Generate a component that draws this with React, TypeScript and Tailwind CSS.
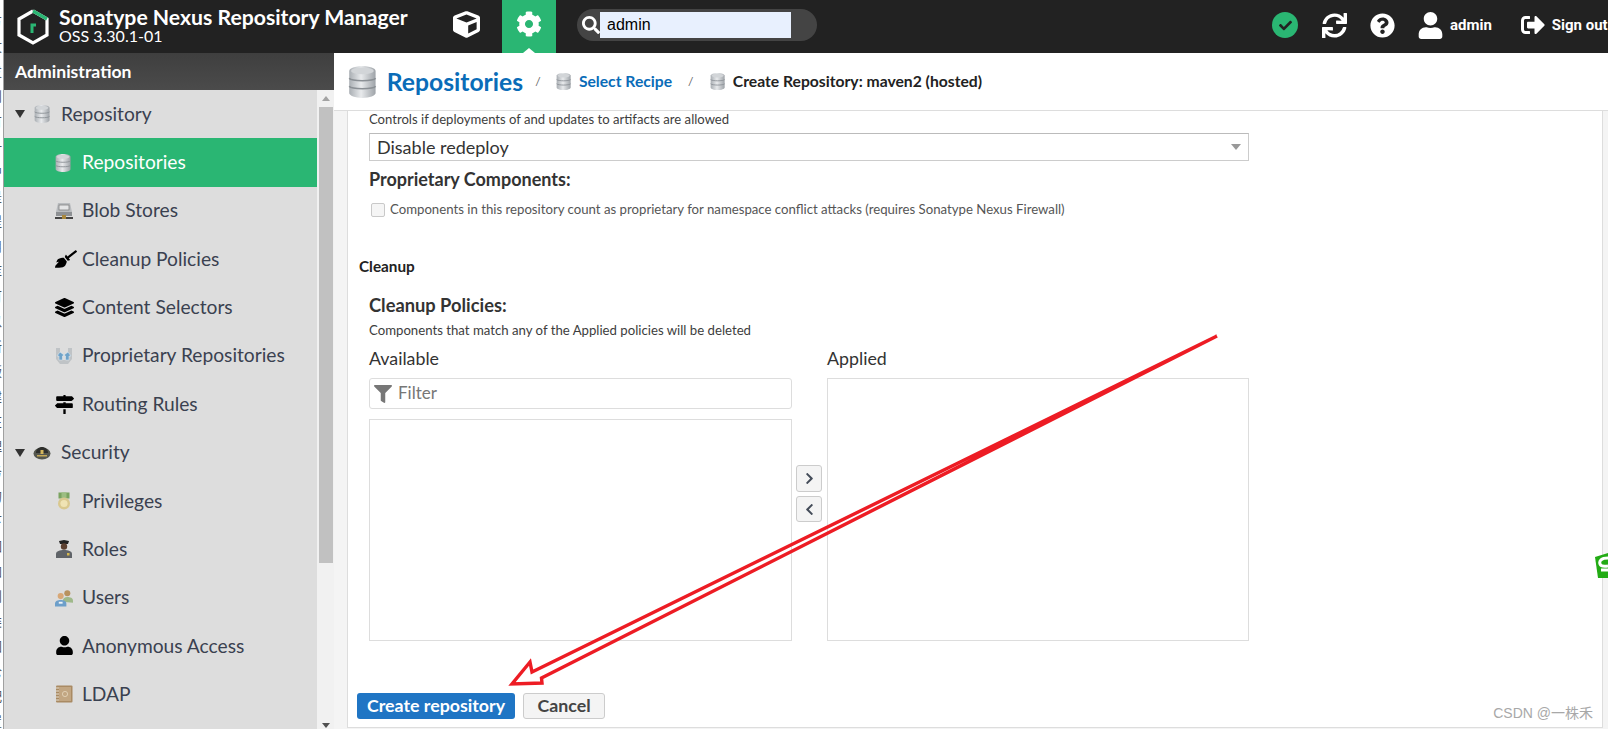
import React from "react";
import {
  FaBroom, FaCheck, FaChevronLeft, FaChevronRight, FaCog, FaCube, FaFilter, FaLayerGroup,
  FaMapSigns, FaQuestionCircle, FaSearch, FaSignOutAlt, FaSync, FaUser,
} from "react-icons/fa";

// Stacked-disk database glyph used for repositories
function DbIcon({ size = 17 }: { size?: number }) {
  return (
    <svg width={size * 0.9} height={size} viewBox="0 0 24 26" preserveAspectRatio="none" className="shrink-0">
      <defs>
        <linearGradient id="dbg" x1="0" x2="1" y1="0" y2="0">
          <stop offset="0" stopColor="#a9aeb3" />
          <stop offset="0.45" stopColor="#e8eaec" />
          <stop offset="1" stopColor="#9ea3a8" />
        </linearGradient>
      </defs>
      <path d="M1 4c0-2 5-4 11-4s11 2 11 4v18c0 2-5 4-11 4S1 24 1 22z" fill="url(#dbg)" />
      <ellipse cx="12" cy="4" rx="9.5" ry="2.8" fill="#d2d5d8" />
      <path d="M1 10c2 2.6 20 2.6 22 0M1 16.500c2 2.600 20 2.600 22 0" stroke="#8a8f94" strokeWidth="1.300" fill="none" />
    </svg>
  );
}

function BlobIcon() {
  return (
    <svg width="18" height="18" viewBox="0 0 18 18">
      <path d="M3 1h12l2 9H1z" fill="#b9bcbf" />
      <rect x="4" y="3" width="10" height="5" fill="#e4e5e6" stroke="#777" strokeWidth="0.700" />
      <rect x="1" y="10" width="16" height="4" fill="#8d9093" />
      <rect x="0" y="15" width="7" height="2" fill="#444" />
      <rect x="11" y="15" width="7" height="2" fill="#444" />
      <rect x="7" y="13" width="4" height="4" fill="#a8873c" />
    </svg>
  );
}

function ProprietaryIcon() {
  return (
    <svg width="18" height="18" viewBox="0 0 18 18">
      <path d="M1 1h4v9l3 3h2l3-3V1h4v11l-4 5H5l-4-5z" fill="#bfc3c6" />
      <path d="M5 5l4 3-1.500 1v4H4V9H2zM13 5l3 4h-2v4h-3.500V9L9 8z" fill="#6fa3c9" stroke="#e6eef4" strokeWidth="0.500" />
    </svg>
  );
}

function MedalIcon() {
  return (
    <svg width="18" height="18" viewBox="0 0 18 18">
      <rect x="3.500" y="0.500" width="11" height="6" fill="#7aa35f" />
      <rect x="6.500" y="0.500" width="5" height="6" fill="#9cbd82" />
      <circle cx="9" cy="11.500" r="6" fill="#d9c88f" />
      <circle cx="9" cy="11.500" r="3.600" fill="#efe3b4" />
    </svg>
  );
}

function OfficerIcon() {
  return (
    <svg width="18" height="18" viewBox="0 0 18 18">
      <path d="M4 1l5-1 5 1-1 3H5z" fill="#222" />
      <circle cx="9" cy="6.500" r="3.200" fill="#5c4030" />
      <path d="M1 18v-4c0-3 4-4 8-4s8 1 8 4v4z" fill="#5f6368" />
      <rect x="12" y="13" width="2.500" height="2.500" fill="#d5b84e" />
    </svg>
  );
}

function UsersIcon() {
  return (
    <svg width="19" height="18" viewBox="0 0 19 18">
      <circle cx="13" cy="4" r="3.200" fill="#b8925f" />
      <path d="M8 13c0-3 2-5 5-5s6 1 6 4v2z" fill="#9fb98a" />
      <circle cx="6" cy="7" r="3.200" fill="#d8a877" />
      <path d="M0 18v-3c0-3 3-4 6-4s6 1 6 4v3z" fill="#6d9fca" />
      <rect x="4" y="13" width="4" height="2" fill="#eef3f8" />
    </svg>
  );
}

function LdapIcon() {
  return (
    <svg width="18" height="18" viewBox="0 0 18 18">
      <rect x="1" y="0.500" width="16.500" height="17" rx="1" fill="#a98a63" />
      <rect x="4" y="2" width="12" height="14" fill="#c2a682" />
      <path d="M1 3h3M1 6h3M1 9h3M1 12h3M1 15h3" stroke="#e9e2d4" strokeWidth="1.200" />
      <circle cx="10" cy="9" r="2.600" fill="none" stroke="#e2d2b8" strokeWidth="0.900" />
    </svg>
  );
}

function CapIcon() {
  return (
    <svg width="18" height="14" viewBox="0 0 18 14">
      <ellipse cx="9" cy="7.500" rx="8.500" ry="6" fill="#55574f" />
      <path d="M3 7c0-4 3-6 6-6s6 2 6 6z" fill="#2e2f2c" />
      <rect x="7.500" y="4" width="3" height="4" fill="#d3b65c" />
      <rect x="4" y="9" width="10" height="1.500" fill="#c5a957" />
    </svg>
  );
}

// Hexagonal brand mark with the green corner stroke
function Logo() {
  return (
    <svg width="32" height="36" viewBox="0 0 32 36" className="shrink-0">
      <path d="M16 2L30 10V26L16 34L2 26V10L16 2" fill="none" stroke="#fff" strokeWidth="3.200" />
      <path d="M16 2L30 10" fill="none" stroke="#2ab673" strokeWidth="3.400" />
      <path d="M13.500 24V14.500h5.500v3h-2.500V24z" fill="#2ab673" />
    </svg>
  );
}

function Caret() {
  return <span className="w-0 h-0 border-l-[5.500px] border-r-[5.500px] border-t-[8px] border-l-transparent border-r-transparent border-t-[#333] shrink-0" />;
}

type Row = { label: string; icon: React.ReactNode; parent?: boolean; active?: boolean };

const rows: Row[] = [
  { label: "Repository", icon: <DbIcon size={18} />, parent: true },
  { label: "Repositories", icon: <DbIcon size={18} />, active: true },
  { label: "Blob Stores", icon: <BlobIcon /> },
  { label: "Cleanup Policies", icon: <FaBroom className="text-black text-[22px] shrink-0" /> },
  { label: "Content Selectors", icon: <FaLayerGroup className="text-black text-[19px] shrink-0" /> },
  { label: "Proprietary Repositories", icon: <ProprietaryIcon /> },
  { label: "Routing Rules", icon: <FaMapSigns className="text-black text-[19px] shrink-0" /> },
  { label: "Security", icon: <CapIcon />, parent: true },
  { label: "Privileges", icon: <MedalIcon /> },
  { label: "Roles", icon: <OfficerIcon /> },
  { label: "Users", icon: <UsersIcon /> },
  { label: "Anonymous Access", icon: <FaUser className="text-black text-[19px] shrink-0" /> },
  { label: "LDAP", icon: <LdapIcon /> },
];

// Clipped tail of the window sitting behind this one
const behind = ["方", "文", "发", "则", "有", "一", "中", "是", "提", "用", "库", "可", "以", "新", "版", "建", "在", "理", "务", "的", "下", "如", "加", "到", "类", "图", "仓", "配", "置"];

function NavRow({ row }: { row: Row }) {
  return (
    <div className={`h-[48.350px] shrink-0 flex items-center ${row.active ? "bg-[#2ab673] text-white" : "text-[#3a4150]"} ${row.parent ? "pl-[11px]" : "pl-[51px]"}`}>
      {row.parent ? (
        <>
          <Caret />
          <span className="w-[18px] ml-[8px] flex justify-center">{row.icon}</span>
          <span className="ml-[10px] text-[19.200px]">{row.label}</span>
        </>
      ) : (
        <>
          <span className="w-[18px] flex justify-start">{row.icon}</span>
          <span className="ml-[9px] text-[19.200px]">{row.label}</span>
        </>
      )}
    </div>
  );
}

function TopBar() {
  return (
    <header className="h-[53px] shrink-0 bg-[#222222] text-white flex items-center overflow-hidden">
      <div className="ml-[13px]"><Logo /></div>
      <div className="ml-[10px] w-[394px] shrink-0 mb-[3px]">
        <div className="text-[21.200px] font-bold leading-[22px] whitespace-nowrap">Sonatype Nexus Repository Manager</div>
        <div className="text-[16px] leading-[16px]">OSS 3.30.1-01</div>
      </div>
      <FaCube className="text-[27px] shrink-0 mb-[5px]" />
      <div className="relative w-[54px] h-[53px] ml-[22px] shrink-0 bg-[#2ab673] flex justify-center pt-[11px]">
        <FaCog className="text-[26px]" />
        <span className="absolute bottom-0 left-[21px] w-0 h-0 border-l-[6px] border-r-[6px] border-b-[5px] border-l-transparent border-r-transparent border-b-white" />
      </div>
      <div className="ml-[21px] w-[240px] h-[32px] mb-[3px] shrink-0 rounded-full bg-[#444444] flex items-center pl-[5px]">
        <FaSearch className="text-[18px] shrink-0" />
        <div className="w-[191px] h-[26px] bg-[#e8f0fe] text-black text-[16px] leading-[26px] pl-[7px] [font-family:'Liberation_Sans',sans-serif]">admin</div>
      </div>
      <div className="ml-[455px] flex items-center shrink-0 mb-[3px]">
        <span className="w-[26px] h-[26px] rounded-full bg-[#2ab673] flex items-center justify-center"><FaCheck className="text-[13px] text-[#222222]" /></span>
        <FaSync className="text-[25px] ml-[24px]" />
        <FaQuestionCircle className="text-[25px] ml-[23px]" />
        <FaUser className="text-[27px] ml-[22px]" />
        <span className="ml-[6px] text-[15px] font-bold [font-family:Roboto,sans-serif]">admin</span>
        <FaSignOutAlt className="text-[24px] ml-[29px]" />
        <span className="ml-[7px] text-[15px] font-bold whitespace-nowrap [font-family:Roboto,sans-serif]">Sign out</span>
      </div>
    </header>
  );
}

function Sidebar() {
  return (
    <aside className="w-[330px] shrink-0 flex flex-col bg-[#dddddd]">
      <div className="h-[37px] shrink-0 bg-gradient-to-b from-[#3f3f3f] to-[#4b4b4b] text-white font-bold text-[17.600px] leading-[37px] pl-[11px]">Administration</div>
      <div className="flex-1 flex min-h-0">
        <div className="flex-1 flex flex-col overflow-hidden">
          {rows.map((r) => <NavRow key={r.label} row={r} />)}
        </div>
        <div className="w-[17px] shrink-0 bg-[#f1f1f1] flex flex-col items-center">
          <span className="mt-[6px] w-0 h-0 border-l-[4px] border-r-[4px] border-b-[5px] border-l-transparent border-r-transparent border-b-[#a3a3a3]" />
          <div className="mt-[6px] w-[14px] h-[456px] bg-[#c1c1c1]" />
          <span className="mt-auto mb-[1px] w-0 h-0 border-l-[4px] border-r-[4px] border-t-[5px] border-l-transparent border-r-transparent border-t-[#505050]" />
        </div>
      </div>
    </aside>
  );
}

function Form() {
  return (
    <div className="flex-1 bg-white border-x border-b border-[#dddddd] pl-[9px] text-[#333333] overflow-hidden">
      <div className="ml-[12px] w-[880px]">
        <p className="h-[18px] leading-[16px] text-[13.100px] text-[#3d3d3d] whitespace-nowrap">Controls if deployments of and updates to artifacts are allowed</p>
        <div className="mt-[4px] h-[28px] border border-[#cccccc] border-t-[#bbbbbb] flex items-center pl-[7px] pr-[7px] justify-between text-[18px]">
          <span>Disable redeploy</span>
          <span className="w-0 h-0 border-l-[5px] border-r-[5px] border-t-[6px] border-l-transparent border-r-transparent border-t-[#999999]" />
        </div>
        <h3 className="mt-[6px] h-[24px] leading-[24px] text-[18px] font-bold whitespace-nowrap">Proprietary Components:</h3>
        <label className="mt-[11px] h-[15px] flex items-center">
          <span className="w-[14px] h-[14px] ml-[2px] rounded-[2px] border border-[#c9c9c9] bg-[#f5f5f5] shrink-0" />
          <span className="ml-[5px] text-[13.200px] leading-[15px] text-[#555555] whitespace-nowrap">Components in this repository count as proprietary for namespace conflict attacks (requires Sonatype Nexus Firewall)</span>
        </label>
      </div>
      <h2 className="mt-[39px] ml-[2px] h-[20px] leading-[20px] text-[15.300px] font-bold text-[#222222]">Cleanup</h2>
      <div className="ml-[12px] w-[880px]">
        <h3 className="mt-[18px] h-[24px] leading-[22px] text-[18.300px] font-bold">Cleanup Policies:</h3>
        <p className="mt-[4px] h-[16px] leading-[16px] text-[13.200px] text-[#3d3d3d] whitespace-nowrap">Components that match any of the Applied policies will be deleted</p>
        <div className="mt-[11px] flex">
          <div className="w-[423px] shrink-0">
            <div className="h-[20px] leading-[18px] text-[17.800px]">Available</div>
            <div className="mt-[9px] h-[31px] rounded-[3px] border border-[#dddddd] flex items-center pl-[4px] text-[17px] text-[#777777]">
              <FaFilter className="text-[18px] text-[#777777]" />
              <span className="ml-[6px] -mt-[1px]">Filter</span>
            </div>
            <div className="mt-[10px] h-[222px] border border-[#dddddd]" />
          </div>
          <div className="w-[35px] shrink-0 pt-[116px] pl-[4px] flex flex-col gap-[4px]">
            <button className="w-[26px] h-[27px] rounded-[3px] border border-[#cccccc] bg-[#f4f4f4] flex items-center justify-center text-[#444c59]"><FaChevronRight className="text-[13px]" /></button>
            <button className="w-[26px] h-[26px] rounded-[3px] border border-[#cccccc] bg-[#f4f4f4] flex items-center justify-center text-[#444c59]"><FaChevronLeft className="text-[13px]" /></button>
          </div>
          <div className="w-[422px] shrink-0">
            <div className="h-[20px] leading-[18px] text-[17.800px]">Applied</div>
            <div className="mt-[9px] h-[263px] border border-[#dddddd]" />
          </div>
        </div>
      </div>
      <div className="mt-[52px] flex gap-[8px] text-[17.800px] font-bold leading-none">
        <button className="w-[158px] h-[26px] rounded-[3px] bg-[#1f75c4] text-white">Create repository</button>
        <button className="w-[82px] h-[26px] rounded-[3px] border border-[#cccccc] bg-[#f4f4f4] text-[#444444]">Cancel</button>
      </div>
    </div>
  );
}

function Main() {
  return (
    <main className="flex-1 min-w-0 flex flex-col bg-[#f4f4f4]">
      <div className="h-[58px] shrink-0 bg-white border-b border-[#dddddd] flex items-center pl-[14px]">
        <span className="mt-[1px]"><DbIcon size={32} /></span>
        <h1 className="ml-[10px] text-[24.700px] font-bold text-[#0a6cb8] whitespace-nowrap">Repositories</h1>
        <span className="ml-[12px] text-[12px] text-[#666666]">/</span>
        <span className="ml-[15px]"><DbIcon size={17} /></span>
        <a className="ml-[8px] text-[15.700px] font-bold text-[#0a6cb8] whitespace-nowrap">Select Recipe</a>
        <span className="ml-[16px] text-[12px] text-[#666666]">/</span>
        <span className="ml-[16px]"><DbIcon size={17} /></span>
        <span className="ml-[8px] text-[15.700px] font-bold text-[#222222] whitespace-nowrap">Create Repository: maven2 (hosted)</span>
      </div>
      <div className="flex-1 min-h-0 flex pl-[13px] pr-[5px] pb-[1px]">
        <Form />
      </div>
    </main>
  );
}

export default function App() {
  return (
    <div className="relative w-[1608px] h-[729px] overflow-hidden flex bg-white [font-family:Lato,'Noto_Sans_CJK_SC',sans-serif]">
      <div className="w-[4px] shrink-0 border-r border-[#a0a0a0] overflow-hidden pt-[8px] flex flex-col [font-family:'Noto_Sans_CJK_SC',sans-serif]">
        {behind.map((c, i) => (
          <span key={i} className="block -ml-[11px] w-[14px] h-[25px] text-[13px] leading-[25px] text-[#555555]">{c}</span>
        ))}
      </div>
      <div className="flex-1 min-w-0 flex flex-col">
        <TopBar />
        <div className="flex-1 min-h-0 flex">
          <Sidebar />
          <Main />
        </div>
      </div>

      {/* Hand-drawn callout arrow over the form */}
      <svg width="1608" height="729" className="absolute inset-0 pointer-events-none">
        <path d="M1217 336L532 672L530 662L512 684L542 683L541.500 678L1217 336Z" fill="none" stroke="#ed1c24" strokeWidth="3.400" strokeLinejoin="miter" />
      </svg>

      {/* Floating chat widget peeking in from the right edge */}
      <svg width="13" height="26" viewBox="0 0 13 26" className="absolute left-[1595px] top-[553px]">
        <path d="M0 4L13 0V25H3z" fill="#22ab14" />
        <path d="M13 5C6 5 4 8 5 11C6 14 13 13 13 13M6 17H13" fill="none" stroke="#fff" strokeWidth="3" />
      </svg>

      <span className="absolute right-[15px] top-[703px] text-[14px] leading-[20px] text-[#a8a8a8] [font-family:'Liberation_Sans','Noto_Sans_CJK_SC',sans-serif]">CSDN @一株禾</span>
    </div>
  );
}
